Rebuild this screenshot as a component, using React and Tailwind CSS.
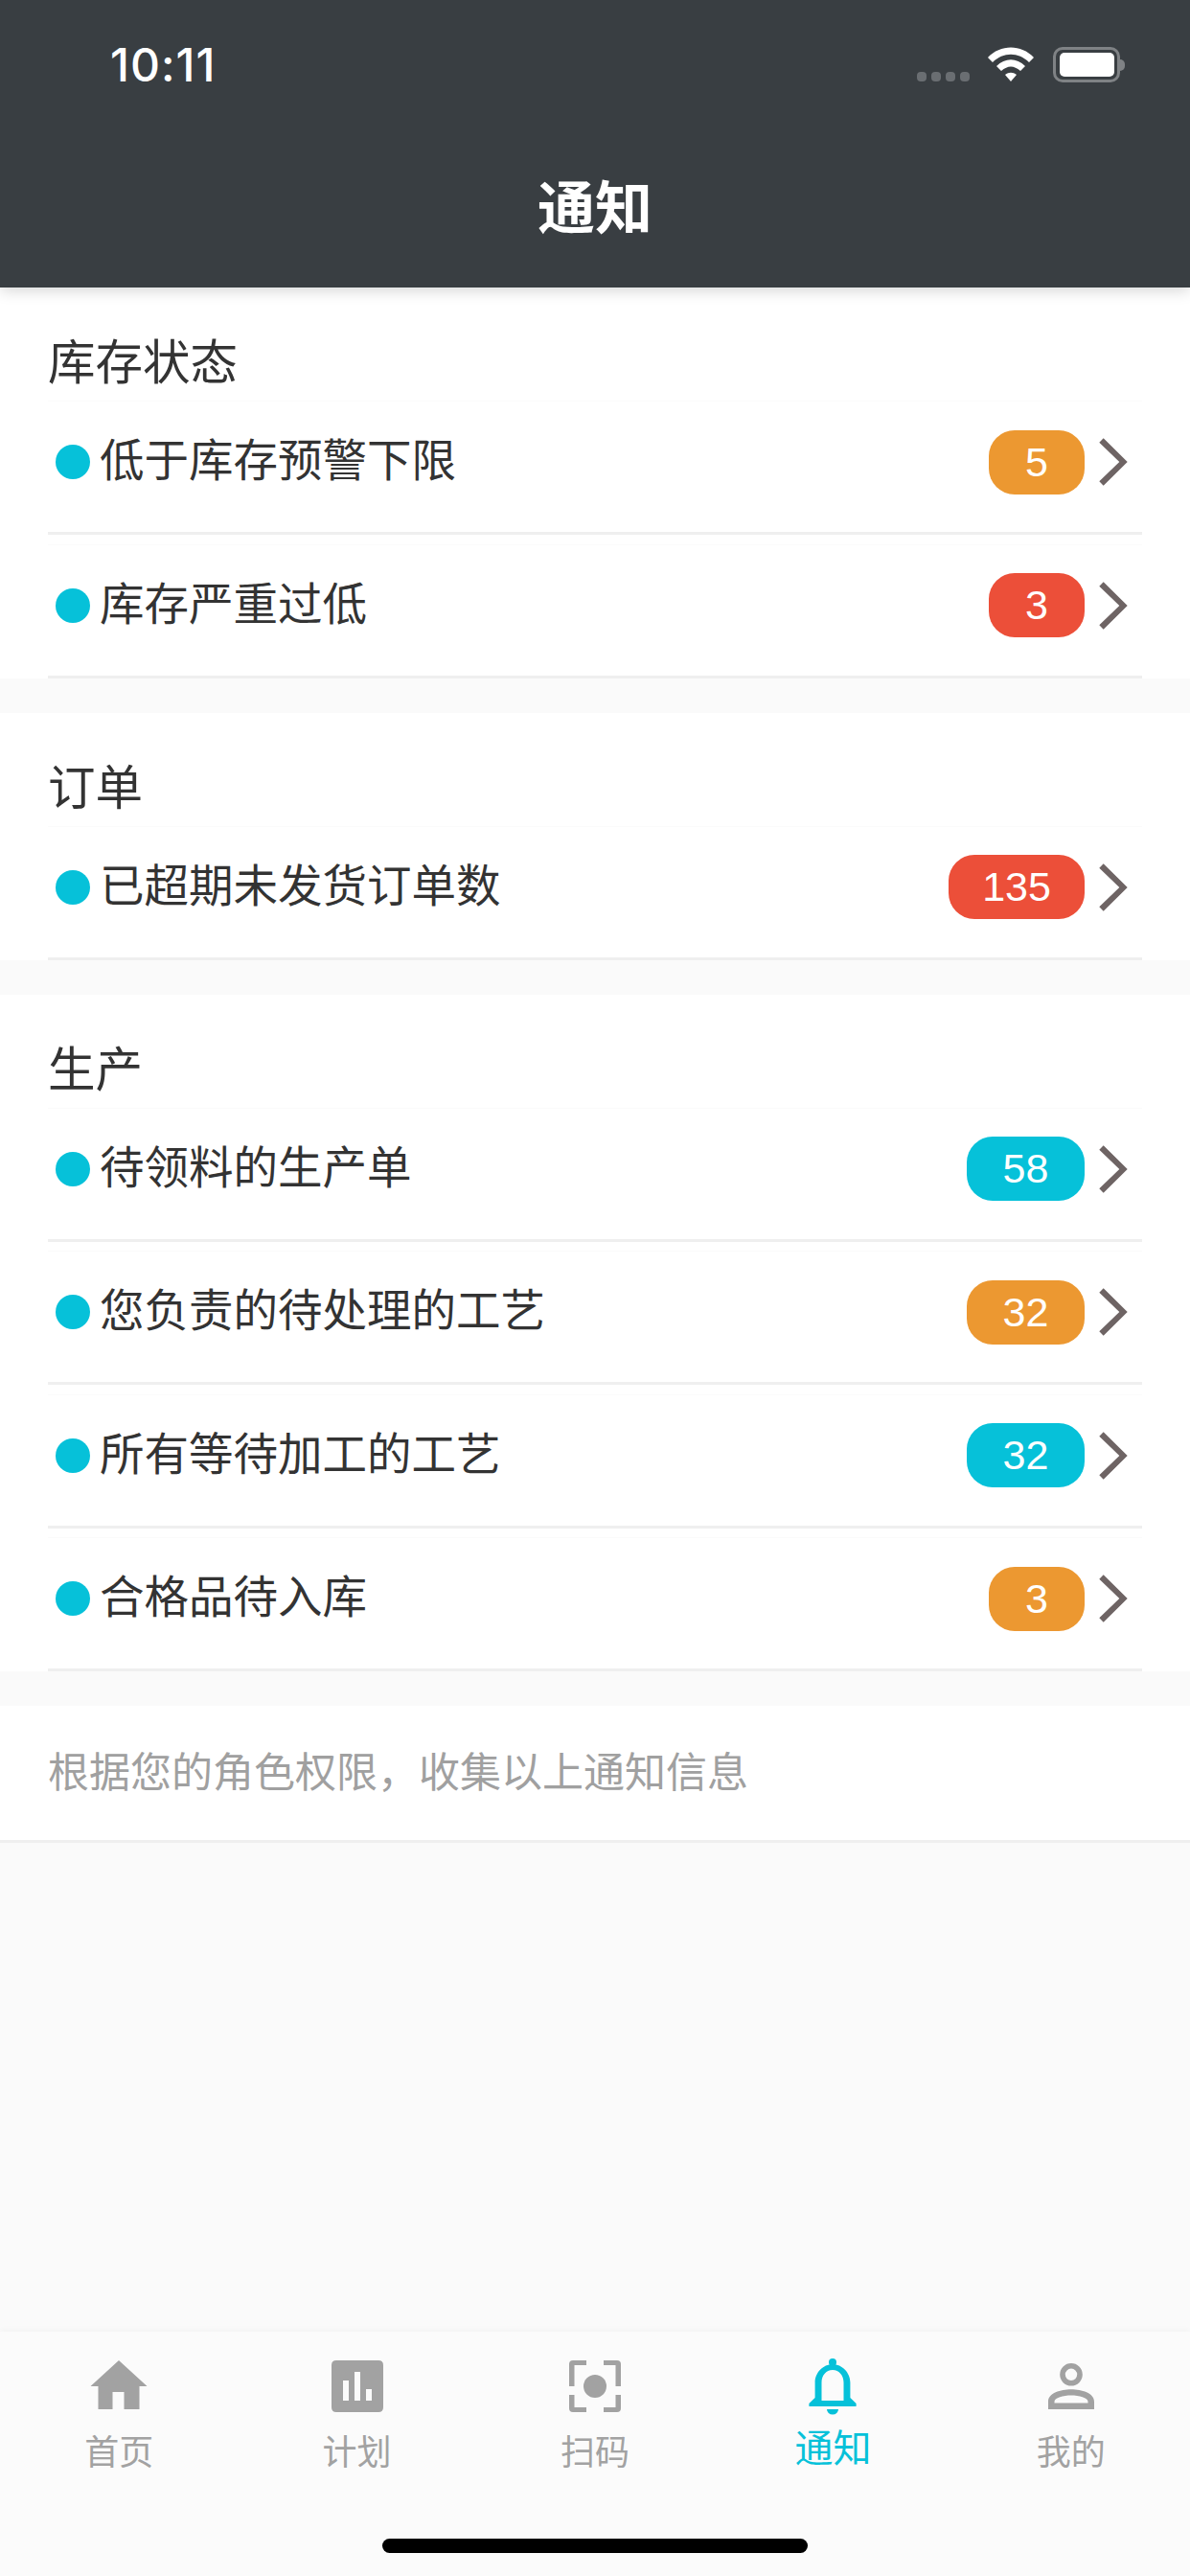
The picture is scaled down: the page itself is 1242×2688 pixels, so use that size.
const font = { fontFamily: '"Liberation Sans", "Noto Sans CJK SC", sans-serif' };

const ORANGE = "bg-[#ec9831]";
const RED = "bg-[#ec4f39]";
const CYAN = "bg-[#06c1d9]";

const sections = [
  {
    title: "库存状态",
    rows: [
      { label: "低于库存预警下限", count: 5, color: ORANGE, width: "w-[100px]" },
      { label: "库存严重过低", count: 3, color: RED, width: "w-[100px]" },
    ],
  },
  {
    title: "订单",
    rows: [{ label: "已超期未发货订单数", count: 135, color: RED, width: "w-[142px]" }],
  },
  {
    title: "生产",
    rows: [
      { label: "待领料的生产单", count: 58, color: CYAN, width: "w-[123px]" },
      { label: "您负责的待处理的工艺", count: 32, color: ORANGE, width: "w-[123px]" },
      { label: "所有等待加工的工艺", count: 32, color: CYAN, width: "w-[123px]" },
      { label: "合格品待入库", count: 3, color: ORANGE, width: "w-[100px]" },
    ],
  },
];

const StatusBar = () => (
  <div className="flex h-[174px] items-start justify-between pl-[115px] pr-[68px] pt-[40px]">
    <span className="text-[48px] leading-[56px] font-medium tracking-[1px] text-white" style={{ fontFamily: "Inter, sans-serif" }}>
      10:11
    </span>
    <div className="flex items-start pt-[9px]">
      <div className="mt-[26px] mr-[19px] flex gap-[5px]">
        <span className="h-[10px] w-[10px] rounded-[4px] bg-[#6a6e72]" />
        <span className="h-[10px] w-[10px] rounded-[4px] bg-[#6a6e72]" />
        <span className="h-[10px] w-[10px] rounded-[4px] bg-[#6a6e72]" />
        <span className="h-[10px] w-[10px] rounded-[4px] bg-[#6a6e72]" />
      </div>
      <svg width="48" height="36" viewBox="0 0 48 36" className="mr-[20px]">
        <path d="M0 11 C13 -3 35 -3 48 11 L43 16 C32 5 16 5 5 16 Z" fill="#fff" />
        <path d="M9 20 C18 11 30 11 39 20 L34 25 C27 19 21 19 14 25 Z" fill="#fff" />
        <path d="M18 29 C22 26 26 26 30 29 L24 36 Z" fill="#fff" />
      </svg>
      <div className="flex h-[37px] w-[70px] items-center justify-center rounded-[10px] border-[3px] border-[#7f8285]">
        <span className="h-[25px] w-[57px] rounded-[5px] bg-white" />
      </div>
      <span className="mt-[13px] h-[12px] w-[5px] rounded-r-full bg-[#7f8285]" />
    </div>
  </div>
);

const Row = ({ label, count, color, width, first }) => (
  <div className={`flex h-[140px] items-center border-t border-b-[3px] border-t-[#fbfbfb] border-b-[#efefef] pb-[10px] ${first ? "" : "mt-[9.5px]"}`}>
    <span className="ml-[8px] h-[36px] w-[36px] rounded-full bg-[#06c1d9]" />
    <span className="ml-[10px] flex-1 text-[46.5px] text-[#333333]">{label}</span>
    <span className={`flex h-[67px] items-center justify-center rounded-[27px] text-[43px] text-white ${width} ${color}`}>
      {count}
    </span>
    <svg width="30" height="50" viewBox="0 0 30 50" className="mx-[15px]">
      <path d="M0.3 4.7 L4.7 0.3 L29.7 25 L4.7 49.7 L0.3 45.3 L21.3 25 Z" fill="#6e6464" />
    </svg>
  </div>
);

const Section = ({ title, rows }) => (
  <section className="mb-[36px] bg-white px-[50px] pt-[44px]">
    <h2 className="mb-[4px] text-[49.5px] leading-[70px] font-normal text-[#333333]">{title}</h2>
    {rows.map((row, i) => (
      <Row key={row.label} first={i === 0} {...row} />
    ))}
  </section>
);

const tabs = [
  {
    label: "首页",
    icon: <path d="M42 11 L71.5 38 H63.5 V62 H47.5 V44 H35.5 V62 H20.5 V38 H12.5 Z" fill="currentColor" />,
  },
  {
    label: "计划",
    icon: (
      <path
        fillRule="evenodd"
        d="M20 11 H64 Q69 11 69 16 V60 Q69 65 64 65 H20 Q15 65 15 60 V16 Q15 11 20 11 Z M27 32 V53 H33 V32 Z M39 23 V53 H45 V23 Z M51 41 V53 H57 V41 Z"
        fill="currentColor"
      />
    ),
  },
  {
    label: "扫码",
    icon: (
      <g fill="currentColor">
        <circle cx="42" cy="38" r="12" />
        <path d="M15 38 V15 Q15 11 19 11 H33 V16 H20.5 V38 Z M69 38 V15 Q69 11 65 11 H51 V16 H63.5 V38 Z" />
        <path d="M15 47 V61 Q15 65 19 65 H33 V60 H20.5 V47 Z M69 47 V61 Q69 65 65 65 H51 V60 H63.5 V47 Z" />
      </g>
    ),
  },
  {
    label: "通知",
    active: true,
    icon: (
      <g fill="currentColor">
        <circle cx="42" cy="13" r="4" />
        <path
          fillRule="evenodd"
          d="M42 15 C52 15 60.4 24 60.4 34 V50 L66.6 56 V59 H17.4 V56 L23.6 50 V34 C23.6 24 32 15 42 15 Z M42 21 C35 21 30.5 27 30.5 34 V53 H53.5 V34 C53.5 27 49 21 42 21 Z"
        />
        <path d="M36 62 H48 A6 5.5 0 0 1 36 62 Z" />
      </g>
    ),
  },
  {
    label: "我的",
    icon: (
      <g fill="currentColor">
        <path
          fillRule="evenodd"
          d="M42 14 A11.8 11.8 0 1 1 42 37.6 A11.8 11.8 0 1 1 42 14 Z M42 19.6 A6.2 6.2 0 1 0 42 32 A6.2 6.2 0 1 0 42 19.6 Z"
        />
        <path
          fillRule="evenodd"
          d="M18 62 V54 C18 45 31 41.3 42 41.3 C53 41.3 66 45 66 54 V62 Z M24.5 55.5 H59.5 V54 C59.5 50 50 47.5 42 47.5 C34 47.5 24.5 50 24.5 54 Z"
        />
      </g>
    ),
  },
];

const TabBar = () => (
  <nav className="mt-auto h-[255px] bg-[#fbfbfb] shadow-[0_-2px_6px_rgba(0,0,0,0.03)]">
    <div className="flex pt-[19px]">
      {tabs.map((tab) => (
        <div
          key={tab.label}
          className={`flex flex-1 flex-col items-center ${tab.active ? "text-[#06c1d9]" : "text-[#a2a2a2]"}`}
        >
          <svg width="84" height="84" viewBox="0 0 84 84">
            {tab.icon}
          </svg>
          <span className={tab.active ? "-mt-[5px] text-[40px] leading-[48px]" : "text-[36px] leading-[48px]"}>
            {tab.label}
          </span>
        </div>
      ))}
    </div>
    <div className="mx-auto mt-[65px] h-[15px] w-[444px] rounded-full bg-black" />
  </nav>
);

export default function App() {
  return (
    <div className="flex h-[2688px] w-[1242px] flex-col overflow-hidden bg-[#fafafa]" style={font}>
      <header className="relative z-10 h-[300px] bg-[#393e42] shadow-[0_4px_14px_rgba(0,0,0,0.15)]">
        <StatusBar />
        <h1 className="text-center text-[60px] leading-[90px] font-bold text-white">通知</h1>
      </header>
      <main>
        {sections.map((section) => (
          <Section key={section.title} {...section} />
        ))}
        <div className="flex h-[143px] items-center border-b-[3px] border-[#efefef] bg-white px-[50px] text-[43px] text-[#a0a0a0]">
          根据您的角色权限，收集以上通知信息
        </div>
      </main>
      <TabBar />
    </div>
  );
}
